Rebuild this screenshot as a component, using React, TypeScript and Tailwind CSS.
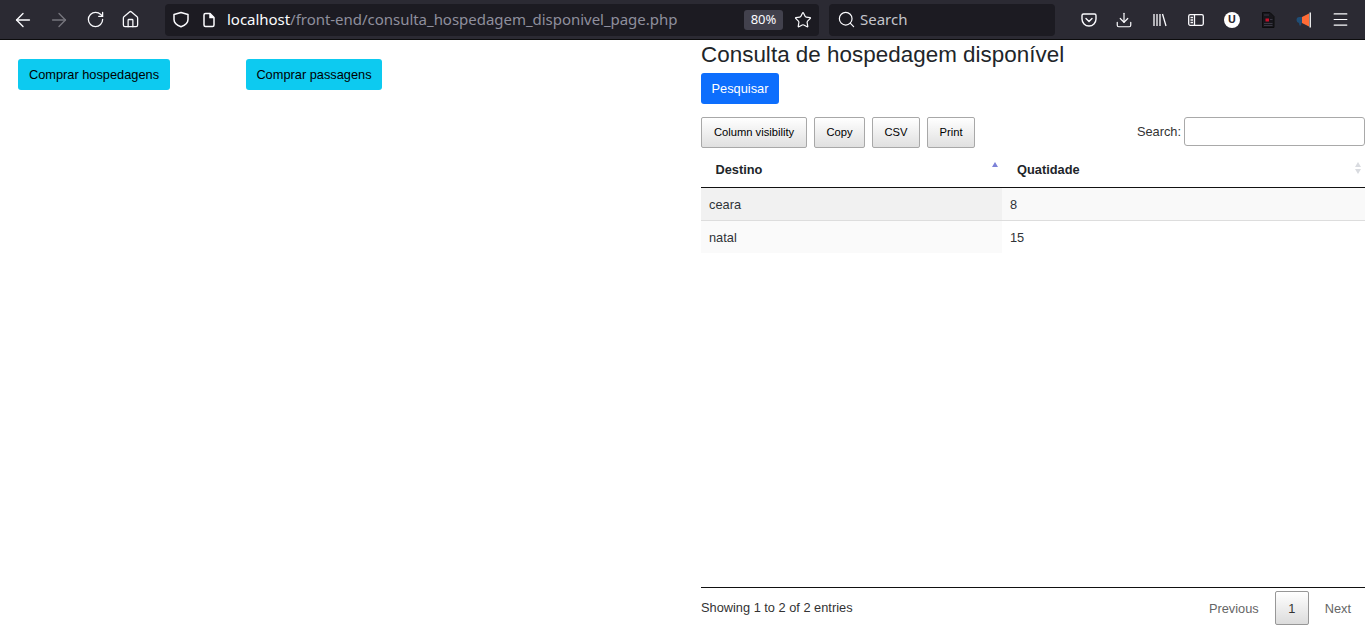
// App.tsx
// Firefox window chrome above a "consulta de hospedagem" DataTables page.

import { ArrowLeft, ArrowRight, Download, House, Menu, RotateCw, Search, Star } from "lucide-react";

const pageFont = "font-['Liberation_Sans',Arial,sans-serif]";

function ToolbarIcon({ children, className = "" }: { children: React.ReactNode; className?: string }) {
  return <span className={`flex size-4 shrink-0 items-center justify-center ${className}`}>{children}</span>;
}

function BrowserToolbar() {
  return (
    <header className="flex h-10 items-center border-b border-[#0c0c0d] bg-[#2b2a33] font-['Noto_Sans',sans-serif] text-[#fbfbfe]">
      <div className="ml-[15px] flex w-[150px] shrink-0 items-center">
        <ToolbarIcon><ArrowLeft size={22} strokeWidth={1.5} className="shrink-0" /></ToolbarIcon>
        <ToolbarIcon className="ml-[20px] text-[#76757d]"><ArrowRight size={22} strokeWidth={1.5} className="shrink-0" /></ToolbarIcon>
        <ToolbarIcon className="ml-[20px]"><RotateCw size={19} strokeWidth={1.6} className="shrink-0" /></ToolbarIcon>
        <ToolbarIcon className="ml-[19px]"><House size={19} strokeWidth={1.6} className="shrink-0" /></ToolbarIcon>
      </div>
      <div className="flex h-8 w-[654px] shrink-0 items-center rounded bg-[#1c1b22] pl-2 pr-2">
        <ToolbarIcon>
          <svg width="16" height="17" viewBox="0 0 16 17" fill="none" stroke="currentColor" strokeWidth="1.5" className="shrink-0">
            <path d="M8 1.500 15 3.500V8.500c0 3.400-2.900 5.800-7 7.300C3.900 14.300 1 11.900 1 8.500V3.500Z" strokeLinejoin="round" />
          </svg>
        </ToolbarIcon>
        <ToolbarIcon className="ml-[12px]">
          <svg width="14" height="16" viewBox="0 0 14 16" fill="none" stroke="currentColor" strokeWidth="1.5" className="shrink-0">
            <path d="M2 3a1.500 1.500 0 0 1 1.500-1.500H8L12 5.500V13a1.500 1.500 0 0 1-1.500 1.500h-7A1.500 1.500 0 0 1 2 13Z" strokeLinejoin="round" />
            <path d="M8 1.500V5.500H12" fill="currentColor" />
          </svg>
        </ToolbarIcon>
        <span className="ml-[10px] whitespace-nowrap text-[15px] tracking-[-0.03px]">
          localhost<span className="text-[#8f8f9d]">/front-end/consulta_hospedagem_disponivel_page.php</span>
        </span>
        <span className="ml-auto flex h-5 w-[39px] items-center justify-center rounded-[3px] bg-[#42414d] text-[13px]">80%</span>
        <ToolbarIcon className="ml-[12px]"><Star size={18} strokeWidth={1.6} className="shrink-0" /></ToolbarIcon>
      </div>
      <div className="ml-[10px] flex h-8 w-[226px] shrink-0 items-center rounded bg-[#1c1b22] pl-[8px] text-[15px] text-[#c4c4ca]">
        <Search size={19} strokeWidth={1.5} className="mr-[4px] shrink-0 text-[#fbfbfe]" />
        Search
      </div>
      <div className="ml-[26px] flex items-center">
        <ToolbarIcon>
          <svg width="16" height="16" viewBox="0 0 16 16" fill="none" stroke="currentColor" strokeWidth="1.4">
            <path d="M2.500 2h11A1.500 1.500 0 0 1 15 3.500V7a7 7 0 0 1-14 0V3.500A1.500 1.500 0 0 1 2.500 2Z" />
            <path d="M5 6.500 8 9.500 11 6.500" strokeLinecap="round" strokeLinejoin="round" />
          </svg>
        </ToolbarIcon>
        <ToolbarIcon className="ml-[19px]"><Download size={18} strokeWidth={1.6} className="shrink-0" /></ToolbarIcon>
        <ToolbarIcon className="ml-[20px]">
          <svg width="16" height="16" viewBox="0 0 16 16" fill="none" stroke="currentColor" strokeWidth="1.3">
            <path d="M2 2v12M5 2v12M8 2v12M10.500 2l3.500 12" />
          </svg>
        </ToolbarIcon>
        <ToolbarIcon className="ml-[20px]">
          <svg width="16" height="16" viewBox="0 0 16 16" fill="none" stroke="currentColor" strokeWidth="1.3">
            <rect x="0.700" y="2.700" width="14.600" height="10.600" rx="1.500" />
            <path d="M6.500 2.700v10.600M2.500 5.500h2.500M2.500 8h2.500M2.500 10.500h2.500" />
          </svg>
        </ToolbarIcon>
        <span className="ml-[20px] flex size-4 items-center justify-center rounded-full bg-white text-[11px] font-bold text-[#2b2a33]">U</span>
        <ToolbarIcon className="ml-[20px]">
          <svg width="16" height="16" viewBox="0 0 16 16">
            <path d="M2.500 .5H10L14 4.500V15.500H2.500Z" fill="#17161c" stroke="#0c0c0d" />
            <rect x="5.500" y="6.500" width="3.500" height="3" fill="#c8102a" />
            <path d="M4 11.500h8.500M4 13.500h8.500M4 3h5M10 7.500h2.500" stroke="#3a3944" />
          </svg>
        </ToolbarIcon>
        <ToolbarIcon className="ml-[20px]">
          <svg width="16" height="16" viewBox="0 0 16 16">
            <path d="M.500 8a3 3 0 0 1 3-3H7V11H5.500L5 13.500H3.500L3 11A3 3 0 0 1 .500 8Z" fill="#1f4d75" />
            <path d="M6 5 13 1.500V14.500L6 11Z" fill="#ff6b35" />
            <rect x="13.500" y="0.500" width="1.500" height="15" fill="#e8e8e8" />
          </svg>
        </ToolbarIcon>
        <ToolbarIcon className="ml-[20px]"><Menu size={19} strokeWidth={1.5} className="shrink-0" /></ToolbarIcon>
      </div>
    </header>
  );
}

function DtButton({ label, className = "" }: { label: string; className?: string }) {
  return (
    <button
      type="button"
      className={`h-[31px] rounded-[2px] border border-[#a8a8a8] bg-gradient-to-b from-white to-[#e0e0e0] text-[11.2px] text-black ${className}`}
    >
      {label}
    </button>
  );
}

function SortArrows() {
  return (
    <span className="absolute right-[4px] top-[11px] flex flex-col gap-[2px]">
      <span className="h-0 w-0 border-x-[3.500px] border-b-[5px] border-x-transparent border-b-[#d9dbe0]" />
      <span className="h-0 w-0 border-x-[3.500px] border-t-[5px] border-x-transparent border-t-[#d9dbe0]" />
    </span>
  );
}

function DataTable() {
  const rows = [
    { destino: "ceara", quantidade: "8", first: "bg-[#f1f1f1] h-[32px]", rest: "bg-[#f9f9f9] h-[32px]", border: "h-[33px] border-b border-[#dddddd]" },
    { destino: "natal", quantidade: "15", first: "bg-[#fafafa] h-[32px]", rest: "bg-white h-[32px]", border: "h-[32px]" },
  ];
  return (
    <div className="text-[12.8px] text-[#2f3337]">
      <div className="flex h-[37px] border-b border-[#111111] font-bold text-[#212529]">
        <div className="relative w-[301px] shrink-0 pl-[14.500px] pt-[9px]">
          Destino
          <span className="absolute right-[4px] top-[11px] h-0 w-0 border-x-[3.500px] border-b-[5px] border-x-transparent border-b-[#7c81d8]" />
        </div>
        <div className="relative flex-1 pl-[15px] pt-[9px]">
          Quatidade
          <SortArrows />
        </div>
      </div>
      {rows.map((row) => (
        <div className={`flex items-start ${row.border}`} key={row.destino}>
          <div className={`flex w-[301px] shrink-0 items-center pl-2 pt-px ${row.first}`}>{row.destino}</div>
          <div className={`flex flex-1 items-center pl-2 pt-px ${row.rest}`}>{row.quantidade}</div>
        </div>
      ))}
    </div>
  );
}

export default function App() {
  return (
    <div className={`h-[640px] overflow-hidden bg-white ${pageFont}`}>
      <BrowserToolbar />
      <main className="flex h-[600px]">
        <section className="flex w-[701px] shrink-0 items-start pl-[18px] pt-[19px]">
          <button type="button" className="h-[31px] w-[152px] rounded-[3px] bg-[#0dcaf0] text-[12.8px] text-black">
            Comprar hospedagens
          </button>
          <button type="button" className="ml-[76px] h-[31px] w-[136px] rounded-[3px] bg-[#0dcaf0] text-[12.8px] text-black">
            Comprar passagens
          </button>
        </section>
        <section className="flex min-w-0 flex-1 flex-col">
          <h1 className="mt-[1px] text-[22.4px] leading-[27px] tracking-[0.03px] text-[#212529]">Consulta de hospedagem disponível</h1>
          <button type="button" className="mt-[5px] h-[31px] w-[78px] rounded-[3px] bg-[#0d6efd] text-[12.8px] text-white">
            Pesquisar
          </button>
          <div className="mt-[13px] flex items-start">
            <DtButton label="Column visibility" className="w-[106px]" />
            <DtButton label="Copy" className="ml-[7px] w-[51px]" />
            <DtButton label="CSV" className="ml-[7px] w-[48px]" />
            <DtButton label="Print" className="ml-[7px] w-[48px]" />
            <label className="ml-auto flex items-center text-[12.8px] text-[#333333]">
              Search:
              <input type="text" aria-label="Search" className="ml-[3px] h-[29px] w-[181px] rounded-[3px] border border-[#a9a9a9] bg-white" />
            </label>
          </div>
          <div className="mt-[3px]">
            <DataTable />
          </div>
          <div className="mt-[334px] flex h-[40px] items-center border-t border-[#111111] text-[12.8px] text-[#333333]">
            <span>Showing 1 to 2 of 2 entries</span>
            <div className="ml-auto flex items-center">
              <span className="pt-[2px] text-[#666666]">Previous</span>
              <span className="ml-[16px] flex h-[34px] w-[34px] items-center justify-center rounded-[2px] border border-[#979797] bg-gradient-to-b from-white to-[#dcdcdc] pt-[2px] text-[#333333]">1</span>
              <span className="ml-[16px] mr-[14px] pt-[2px] text-[#666666]">Next</span>
            </div>
          </div>
        </section>
      </main>
    </div>
  );
}
